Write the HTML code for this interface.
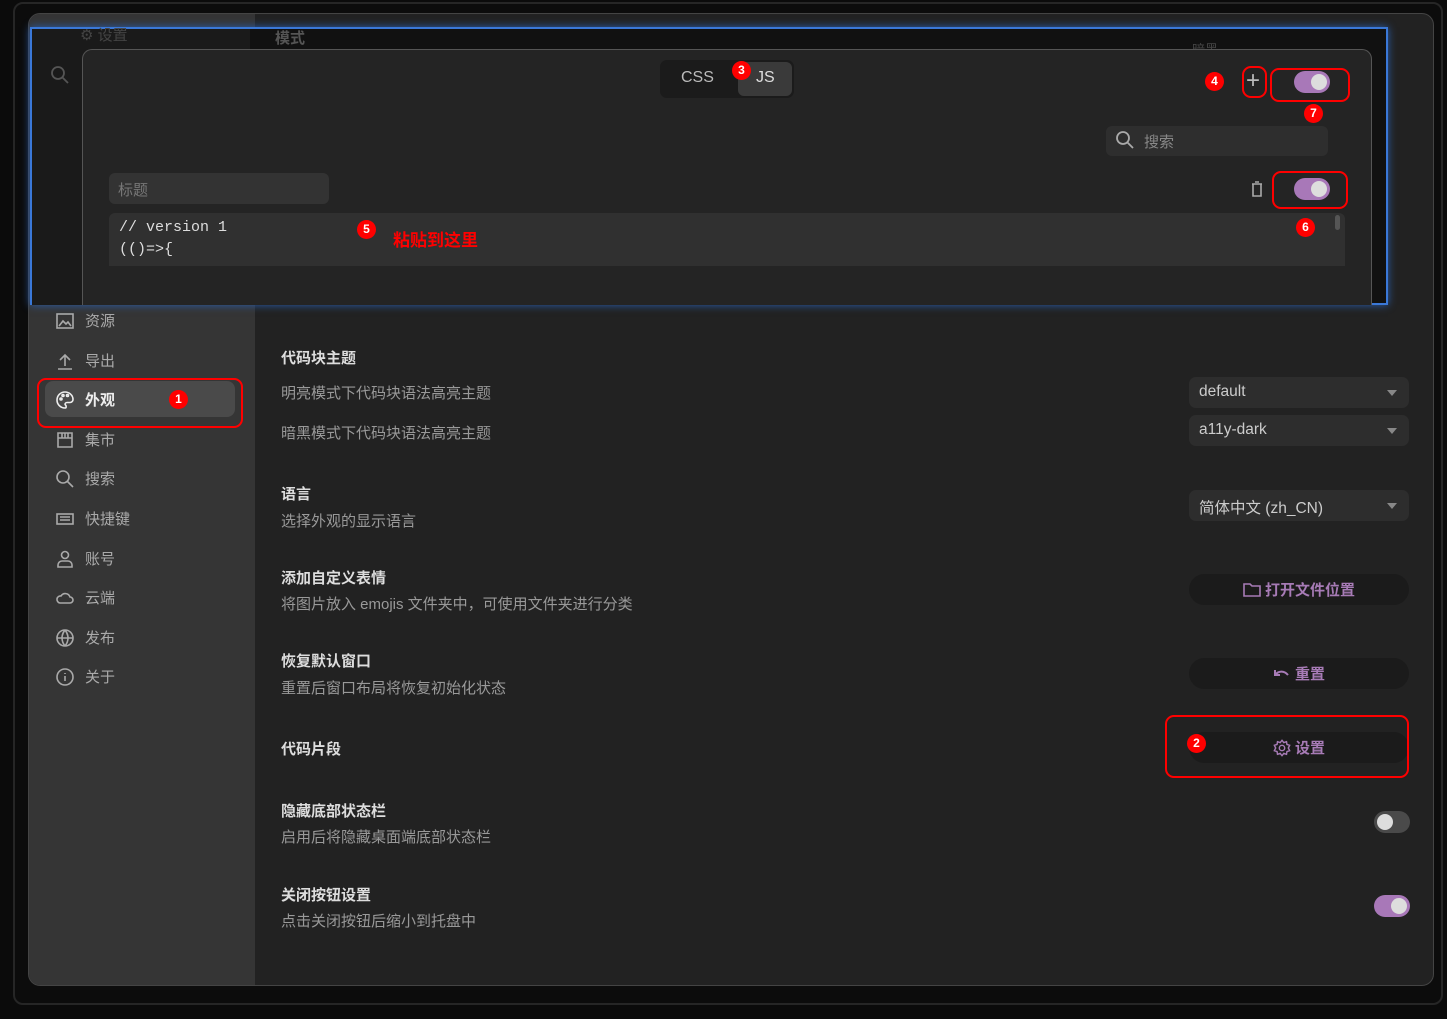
<!DOCTYPE html>
<html><head><meta charset="utf-8"><style>
*{margin:0;padding:0;box-sizing:border-box}
body{width:1447px;height:1019px;background:#0b0b0b;position:relative;overflow:hidden;font-family:"Liberation Sans","Noto Sans CJK SC",sans-serif;}
.a{position:absolute}
.frame{left:13px;top:2px;width:1430px;height:1003px;border:2px solid #262626;border-radius:10px;background:#0c0c0c}
.win{left:28px;top:13px;width:1406px;height:973px;border-radius:12px;background:#222;overflow:hidden;border:1px solid #444}
.side{left:0;top:0;width:226px;height:100%;background:#353535}
.ni{position:absolute;left:26px;font-size:15px;color:#aaa;display:flex;align-items:center;gap:10px}
.ni svg{width:20px;height:20px;stroke:#aaa;fill:none;stroke-width:1.6}
.t{position:absolute;left:252px;font-size:15px;font-weight:bold;color:#ddd}
.d{position:absolute;left:252px;font-size:15px;color:#999}
.sel{position:absolute;left:1160px;width:220px;height:31px;background:#2d2d2d;border-radius:7px;color:#ccc;font-size:15.5px;padding:6px 0 0 10px}
.sel:after{content:"";position:absolute;right:12px;top:13px;border:5px solid transparent;border-top:6px solid #888}
.btn{position:absolute;left:1160px;width:220px;height:31px;background:#1b1b1b;border-radius:16px;color:#a77bb6;font-size:15px;font-weight:bold;display:flex;align-items:center;justify-content:center;gap:4px}
.tg{position:absolute;width:36px;height:22px;border-radius:11px}
.tg i{position:absolute;top:3px;width:16px;height:16px;border-radius:50%;background:#ddd}
.red{position:absolute;border:2.5px solid #f00;border-radius:9px}
.num{position:absolute;width:19px;height:19px;border-radius:50%;background:#f00;color:#fff;font-size:12px;text-align:center;line-height:19px;font-weight:bold}
</style></head><body>
<div class="a frame"></div>
<div class="a win">
 <div class="a side"></div>
 <div class="ni" style="top:296px"><svg viewBox="0 0 20 20"><rect x="2" y="3" width="16" height="14"/><path d="M4 15l4-5 3 3 2-2 3 4"/></svg>资源</div>
 <div class="ni" style="top:336px"><svg viewBox="0 0 20 20"><path d="M10 15V4M5 9l5-5 5 5M3 18h14"/></svg>导出</div>
 <div class="a" style="left:16px;top:367px;width:190px;height:36px;background:#4a4a4a;border-radius:8px"></div>
 <div class="ni" style="top:375px;color:#eee;font-weight:bold"><svg viewBox="0 0 20 20" style="stroke:#eee"><path d="M10 2a8 8 0 100 16c1.5 0 1.5-2 .5-3s0-2.5 1.5-2.5H15a3 3 0 003-3C18 5 14 2 10 2z"/><circle cx="6" cy="9" r="1"/><circle cx="8" cy="5.5" r="1"/><circle cx="12.5" cy="5.5" r="1"/></svg>外观</div>
 <div class="ni" style="top:415px"><svg viewBox="0 0 20 20"><path d="M3 3h14v14H3zM3 8h14M7 3v5M10 3v5M13 3v5"/></svg>集市</div>
 <div class="ni" style="top:454px"><svg viewBox="0 0 20 20"><circle cx="8" cy="8" r="6"/><path d="M12.5 12.5L18 18"/></svg>搜索</div>
 <div class="ni" style="top:494px"><svg viewBox="0 0 20 20"><rect x="2" y="5" width="16" height="10"/><path d="M5 8h10M5 11h10"/></svg>快捷键</div>
 <div class="ni" style="top:534px"><svg viewBox="0 0 20 20"><circle cx="10" cy="6" r="3.5"/><path d="M3 18v-2a4 4 0 014-4h6a4 4 0 014 4v2z"/></svg>账号</div>
 <div class="ni" style="top:573px"><svg viewBox="0 0 20 20"><path d="M5 15h10a3 3 0 000-6 5 5 0 00-9-1 3.5 3.5 0 00-1 7z"/></svg>云端</div>
 <div class="ni" style="top:613px"><svg viewBox="0 0 20 20"><circle cx="10" cy="10" r="8"/><path d="M2 10h16M10 2c-4 5-4 11 0 16M10 2c4 5 4 11 0 16"/></svg>发布</div>
 <div class="ni" style="top:652px"><svg viewBox="0 0 20 20"><circle cx="10" cy="10" r="8"/><path d="M10 9v5M10 6v1"/></svg>关于</div>

 <div class="t" style="top:333px">代码块主题</div>
 <div class="d" style="top:368px">明亮模式下代码块语法高亮主题</div>
 <div class="d" style="top:408px">暗黑模式下代码块语法高亮主题</div>
 <div class="sel" style="top:363px">default</div>
 <div class="sel" style="top:401px">a11y-dark</div>
 <div class="t" style="top:469px">语言</div>
 <div class="d" style="top:496px">选择外观的显示语言</div>
 <div class="sel" style="top:476px">简体中文 (zh_CN)</div>
 <div class="t" style="top:553px">添加自定义表情</div>
 <div class="d" style="top:579px">将图片放入 emojis 文件夹中，可使用文件夹进行分类</div>
 <div class="btn" style="top:560px"><svg width="18" height="16" viewBox="0 0 18 16" fill="none" stroke="#a77bb6" stroke-width="1.6"><path d="M1 2h6l2 2h8v10H1z"/></svg>打开文件位置</div>
 <div class="t" style="top:636px">恢复默认窗口</div>
 <div class="d" style="top:663px">重置后窗口布局将恢复初始化状态</div>
 <div class="btn" style="top:644px"><svg width="18" height="14" viewBox="0 0 18 14" fill="none" stroke="#a77bb6" stroke-width="2"><path d="M2 3v5h5M2 8c3-4 9-5 13 0"/></svg>重置</div>
 <div class="t" style="top:724px">代码片段</div>
 <div class="btn" style="top:718px"><svg width="18" height="18" viewBox="0 0 20 20" fill="none" stroke="#a77bb6" stroke-width="1.6"><circle cx="10" cy="10" r="3"/><path d="M10 1.5l2 2.5 3-1 .5 3 3 1-1.5 3 1.5 3-3 1-.5 3-3-1-2 2.5-2-2.5-3 1-.5-3-3-1 1.5-3L1.5 7l3-1 .5-3 3 1z"/></svg>设置</div>
 <div class="t" style="top:786px">隐藏底部状态栏</div>
 <div class="d" style="top:812px">启用后将隐藏桌面端底部状态栏</div>
 <div class="tg" style="left:1345px;top:797px;background:#4a4a4a"><i style="left:3px"></i></div>
 <div class="t" style="top:870px">关闭按钮设置</div>
 <div class="d" style="top:896px">点击关闭按钮后缩小到托盘中</div>
 <div class="tg" style="left:1345px;top:881px;background:#a878b8"><i style="left:17px"></i></div>
</div>

<!-- overlay top -->
<div class="a" style="left:30px;top:27px;width:1358px;height:278px;background:#111;border:2px solid #3a78d8;box-shadow:0 0 8px #2a5fb0">
 <div class="a" style="left:0;top:0;width:218px;height:276px;background:#1a1a1a"></div>
 <div class="a" style="left:48px;top:-5px;color:#444;font-size:15px">⚙ 设置</div>
 <div class="a" style="left:243px;top:-2px;color:#555;font-size:15px;font-weight:bold">模式</div>
 <div class="a" style="left:1160px;top:10px;color:#444;font-size:13px">暗黑</div>
 <svg class="a" style="left:18px;top:36px" width="20" height="20" viewBox="0 0 20 20" fill="none" stroke="#555" stroke-width="1.8"><circle cx="8" cy="8" r="6"/><path d="M12.5 12.5L18 18"/></svg>
</div>
<div class="a" style="left:82px;top:49px;width:1290px;height:256px;background:#242424;border:1px solid #555;border-bottom:none;border-radius:10px 10px 0 0">
 <div class="a" style="left:577px;top:10px;width:134px;height:38px;background:#1b1b1b;border-radius:7px"></div>
 <div class="a" style="left:598px;top:19px;color:#bbb;font-size:16px">CSS</div>
 <div class="a" style="left:655px;top:12px;width:54px;height:34px;background:#3a3a3a;border-radius:6px;color:#ddd;font-size:16px;padding:7px 0 0 18px">JS</div>
 <div class="a" style="left:1023px;top:76px;width:222px;height:30px;background:#2e2e2e;border-radius:6px;color:#888;font-size:15px;padding:5px 0 0 38px">搜索</div>
 <svg class="a" style="left:1032px;top:80px" width="20" height="20" viewBox="0 0 20 20" fill="none" stroke="#aaa" stroke-width="1.8"><circle cx="8" cy="8" r="6"/><path d="M12.5 12.5L18 18"/></svg>
 <div class="a" style="left:1163px;top:19px;color:#bbb;font-size:24px;font-weight:200;line-height:24px">+</div>
 <div class="tg" style="left:1211px;top:21px;background:#a878b8"><i style="left:17px"></i></div>
 <div class="tg" style="left:1211px;top:128px;background:#a878b8"><i style="left:17px"></i></div>
 <svg class="a" style="left:1167px;top:131px" width="14" height="16" viewBox="0 0 14 16" fill="none" stroke="#aaa" stroke-width="1.6"><path d="M2 3h10M5 1h4M3 3v12h8V3"/></svg>
 <div class="a" style="left:26px;top:123px;width:220px;height:31px;background:#333;border-radius:6px;color:#777;font-size:15px;padding:6px 0 0 9px">标题</div>
 <div class="a" style="left:26px;top:163px;width:1236px;height:53px;background:#303030;border-radius:6px 6px 0 0;font-family:'Liberation Mono',monospace;color:#ddd;font-size:15px;line-height:22px;padding:4px 0 0 10px;overflow:hidden">// version 1<br>(()=&gt;{</div>
 <div class="a" style="left:1252px;top:165px;width:5px;height:15px;background:#555;border-radius:3px"></div>
 <div class="a" style="left:310px;top:176px;color:#f00;font-size:17px;font-weight:bold">粘贴到这里</div>
</div>

<!-- annotations -->
<div class="red" style="left:37px;top:378px;width:206px;height:50px"></div>
<div class="num" style="left:169px;top:390px">1</div>
<div class="red" style="left:1165px;top:715px;width:244px;height:63px"></div>
<div class="num" style="left:1187px;top:734px">2</div>
<div class="num" style="left:732px;top:61px">3</div>
<div class="num" style="left:1205px;top:72px">4</div>
<div class="red" style="left:1242px;top:66px;width:25px;height:32px"></div>
<div class="red" style="left:1270px;top:68px;width:80px;height:34px"></div>
<div class="num" style="left:1304px;top:104px">7</div>
<div class="red" style="left:1272px;top:171px;width:76px;height:38px"></div>
<div class="num" style="left:1296px;top:218px">6</div>
<div class="num" style="left:357px;top:220px">5</div>
</body></html>
